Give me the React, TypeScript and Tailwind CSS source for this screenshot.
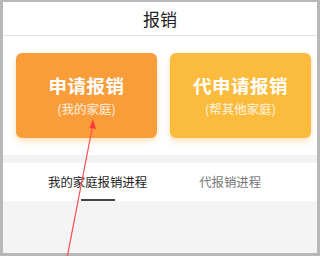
import React from "react";

const font = { fontFamily: '"Noto Sans CJK SC", "Noto Sans", sans-serif' };

function ActionCard({ title, sub, color }: { title: string; sub: string; color: string }) {
  return (
    <div
      className={`${color} w-[141px] h-[85px] rounded-[6px] flex flex-col items-center justify-center shadow-[0_3px_6px_rgba(250,170,60,0.35)]`}
    >
      <div className="text-white text-[18.5px] font-bold leading-none tracking-[0.5px]">{title}</div>
      <div className="text-white/85 text-[12.5px] leading-none mt-[8px]">{sub}</div>
    </div>
  );
}

export default function App() {
  return (
    <div className="relative w-[320px] h-[256px] overflow-hidden bg-white" style={font}>
      <div className="w-full h-full border-l-[3px] border-r-[3px] border-t-[2px] border-b-[3px] border-[#b8b8b8] flex flex-col bg-[#f4f4f4]">
        {/* header */}
        <div className="h-[34px] bg-white border-b border-[#e2e2e2] flex items-center justify-center">
          <span className="text-[17px] text-[#222] leading-none mt-[-1px]">报销</span>
        </div>

        {/* action cards */}
        <div className="bg-white h-[119px] flex items-start pt-[17px] pl-[13px] gap-[13px]">
          <ActionCard title="申请报销" sub="(我的家庭)" color="bg-[#f99d3a]" />
          <ActionCard title="代申请报销" sub="(帮其他家庭)" color="bg-[#fbbb3c]" />
        </div>

        <div className="h-[8px] bg-[#f3f3f3]" />

        {/* tabs */}
        <div className="bg-white h-[38px] flex items-start pl-[45px] pt-[13px]">
          <div className="flex flex-col items-center">
            <span className="text-[12.4px] leading-none text-[#222]">我的家庭报销进程</span>
            <div className="w-[34px] h-[2px] bg-[#444] mt-[11px]" />
          </div>
          <span className="ml-[52px] text-[12.4px] leading-none text-[#777]">代报销进程</span>
        </div>

        <div className="flex-1 bg-[#f4f4f4]" />
      </div>

      {/* annotation arrow */}
      <svg className="absolute inset-0 pointer-events-none" width="320" height="256" viewBox="0 0 320 256">
        <line x1="67" y1="258" x2="93" y2="124" stroke="#ff4d4d" strokeWidth="1.2" />
        <polygon points="93,119 89.5,128 96,129" fill="#ff3b3b" />
      </svg>
    </div>
  );
}
